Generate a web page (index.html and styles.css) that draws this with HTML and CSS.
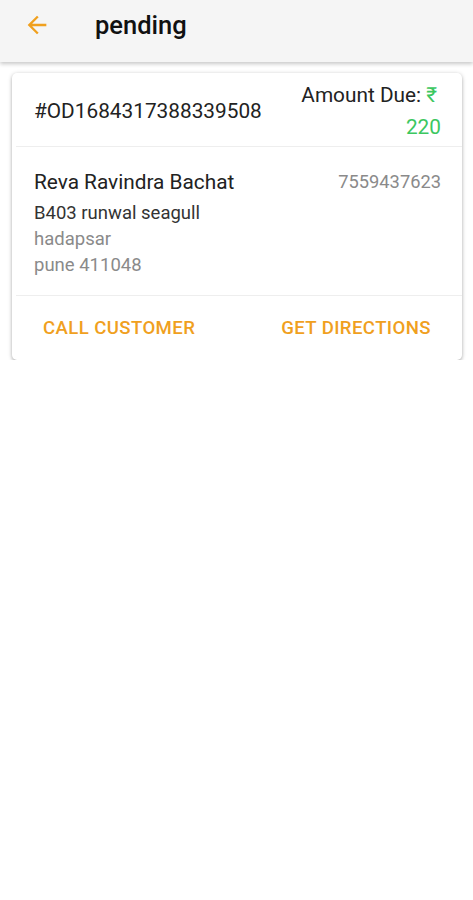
FILE: index.html
```html
<!DOCTYPE html>
<html>
<head>
<meta charset="utf-8">
<link rel="stylesheet" href="styles.css">
</head>
<body>
<header class="appbar">
  <svg class="back" width="28" height="28" viewBox="0 0 24 24"><path d="M20 11H7.83l5.59-5.59L12 4l-8 8 8 8 1.41-1.41L7.83 13H20v-2z" fill="#f0a01e"/></svg>
  <h1 class="title">pending</h1>
</header>
<main class="content">
  <div class="card">
    <div class="row top">
      <div class="order">#OD1684317388339508</div>
      <div class="amount">
        <div class="due">Amount Due: <span class="green">₹</span></div>
        <div class="green value">220</div>
      </div>
    </div>
    <div class="row info">
      <div class="addr">
        <div class="name">Reva Ravindra Bachat</div>
        <div class="line1">B403 runwal seagull</div>
        <div class="line2">hadapsar</div>
        <div class="line2">pune 411048</div>
      </div>
      <div class="phone">7559437623</div>
    </div>
    <div class="actions">
      <button class="btn">CALL CUSTOMER</button>
      <button class="btn">GET DIRECTIONS</button>
    </div>
  </div>
</main>
</body>
</html>
```
FILE: styles.css
```css
* { box-sizing: border-box; }
body { margin: 0; font-family: Roboto, "Noto Sans", sans-serif; background: #fff; color: #212121; }
.appbar { height: 62px; background: #f5f5f5; display: flex; align-items: flex-start; padding: 11px 0 0 23px; box-shadow: 0 2px 4px rgba(0,0,0,0.22); position: relative; }
.back { width: 28px; height: 28px; }
.title { margin: 0 0 0 44px; font-size: 25.5px; line-height: 28px; font-weight: 500; color: #111; }
.content { padding: 11px 11px 0 12px; }
.card { background: #fff; border-radius: 5px; box-shadow: 0 1px 4px rgba(0,0,0,0.25), 0 2px 3px rgba(0,0,0,0.12); }
.row { display: flex; justify-content: space-between; border-bottom: 1px solid #eeeeee; margin-left: 4px; }
.top { padding: 10px 21px 8px 18px; align-items: center; height: 74px; }
.order { font-size: 20.8px; color: #222; }
.amount { text-align: right; font-size: 20.8px; }
.due { color: #222; line-height: 24px; margin-right: 4px; }
.green { color: #3cc760; }
.value { line-height: 24px; margin-top: 8px; }
.info { padding: 23px 21px 16px 18px; height: 149px; }
.name { font-size: 20.8px; color: #222; line-height: 24px; }
.line1 { font-size: 18.5px; color: #333; margin-top: 8px; line-height: 22px; }
.line2 { font-size: 18.5px; color: #8a8a8a; margin-top: 4px; line-height: 22px; }
.phone { font-size: 18.3px; color: #8a8a8a; line-height: 24px; }
.actions { display: flex; justify-content: space-between; padding: 0 31px 0 31px; height: 64px; align-items: center; }
.btn { background: none; border: 0; font-family: Roboto, sans-serif; font-size: 18.6px; font-weight: 500; color: #f0a01e; padding: 0; letter-spacing: 0.4px; }
```
